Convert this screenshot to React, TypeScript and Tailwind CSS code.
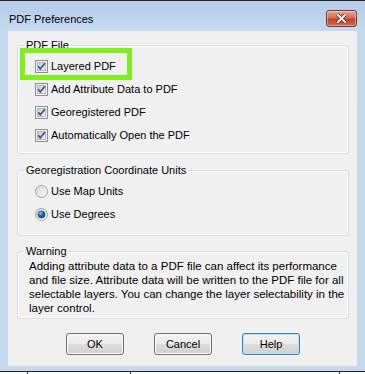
import type { ReactNode } from 'react'

const CheckBox = () => (
  <svg width="13" height="13" viewBox="0 0 13 13" className="shrink-0">
    <defs>
      <linearGradient id="cbFill" x1="0" y1="0" x2="1" y2="1">
        <stop offset="0" stopColor="#c3c9d1" />
        <stop offset="1" stopColor="#f5f6f7" />
      </linearGradient>
    </defs>
    <rect x="0.5" y="0.5" width="12" height="12" fill="#f4f4f4" stroke="#8e8f8f" />
    <rect x="2.5" y="2.5" width="8" height="8" fill="url(#cbFill)" stroke="#b3b8bf" />
    <path d="M3.2 6.2 L5.3 8.9 L9.9 3.3" fill="none" stroke="#44599a" strokeWidth="1.8" />
  </svg>
)

const RadioDot = ({ on }: { on?: boolean }) => (
  <svg width="13" height="13" viewBox="0 0 13 13" className="shrink-0">
    <defs>
      <linearGradient id="rdFill" x1="0" y1="0" x2="1" y2="1">
        <stop offset="0" stopColor="#d6d6d6" />
        <stop offset="1" stopColor="#fbfbfb" />
      </linearGradient>
      <radialGradient id="rdDot" cx="0.35" cy="0.3" r="0.8">
        <stop offset="0" stopColor="#8fd2f3" />
        <stop offset="0.45" stopColor="#1f6fa6" />
        <stop offset="1" stopColor="#0c3a62" />
      </radialGradient>
    </defs>
    <circle cx="6.5" cy="6.5" r="6" fill="url(#rdFill)" stroke="#a4a4a4" />
    {on && <circle cx="6.5" cy="6.5" r="3.6" fill="url(#rdDot)" stroke="#174a73" strokeWidth="0.6" />}
  </svg>
)

const Group = ({
  label,
  className,
  children,
}: {
  label: string
  className?: string
  children: ReactNode
}) => (
  <fieldset
    className={`rounded-[3px] border border-[#d5dfe5] shadow-[inset_0_0_0_1px_#fafafa] ${className ?? ''}`}
  >
    <legend className="ml-[6px] bg-[#f0f0f0] px-[2px] leading-[13px]">{label}</legend>
    {children}
  </fieldset>
)

const Button = ({ label, isDefault }: { label: string; isDefault?: boolean }) => (
  <button
    className={`h-[22px] w-[58px] rounded-[3px] border bg-[linear-gradient(#f2f2f2_0%,#ebebeb_50%,#dddddd_50%,#cfcfcf_100%)] leading-none text-black ${
      isDefault
        ? 'border-[#3c7fb1] shadow-[inset_0_0_0_1px_#b7e3f8]'
        : 'border-[#707070] shadow-[inset_0_0_0_1px_#fbfbfb]'
    }`}
  >
    {label}
  </button>
)

export default function App() {
  const checks = [
    'Layered PDF',
    'Add Attribute Data to PDF',
    'Georegistered PDF',
    'Automatically Open the PDF',
  ]

  return (
    <div className="relative h-[374px] w-[365px] overflow-hidden bg-white font-['Liberation_Sans',Arial,sans-serif] text-[11px] text-black">
      <div className="flex h-[372px] flex-col border-y border-[#262626] bg-[linear-gradient(#b6cce8,#c5d9ef_30px,#c4d8ee)]">
        {/* title bar */}
        <div className="flex h-[30px] items-start justify-between pl-[9px] pr-[8px]">
          <span className="mt-[11px] text-[11px] leading-[15px]">PDF Preferences</span>
          <div className="mt-[9px] flex h-[17px] w-[31px] items-center justify-center rounded-[3px] border border-[#7b3a2d] bg-[linear-gradient(#e8a898,#d36c56_45%,#c2432c_55%,#d06a4f)] shadow-[inset_0_0_0_1px_rgba(255,255,255,0.35)]">
            <svg width="13" height="11" viewBox="0 0 13 11">
              <path d="M2.5 1.5 L10.5 9.5 M10.5 1.5 L2.5 9.5" stroke="#5d2216" strokeWidth="3.4" />
              <path d="M2.5 1.5 L10.5 9.5 M10.5 1.5 L2.5 9.5" stroke="#ffffff" strokeWidth="1.8" />
            </svg>
          </div>
        </div>

        {/* client area */}
        <div className="mx-[8px] flex h-[335px] flex-col bg-[#f0f0f0] pl-[9px] pr-[8px] pt-[8px]">
          <Group label="PDF File">
            <div className="flex flex-col gap-[6px] pb-[9px] pl-[17px] pt-[6px]">
              {checks.map((c) => (
                <label key={c} className="flex h-[17px] items-center gap-[3px]">
                  <CheckBox />
                  <span>{c}</span>
                </label>
              ))}
            </div>
          </Group>

          <Group label="Georegistration Coordinate Units" className="mt-[10px]">
            <div className="flex flex-col gap-[6px] pb-[12px] pl-[17px] pt-[6px]">
              <label className="flex h-[17px] items-center gap-[3px]">
                <RadioDot />
                <span>Use Map Units</span>
              </label>
              <label className="flex h-[17px] items-center gap-[3px]">
                <RadioDot on />
                <span>Use Degrees</span>
              </label>
            </div>
          </Group>

          <Group label="Warning" className="mt-[9px]">
            <p className="whitespace-nowrap pb-[3px] pl-[11px] pt-[1px] text-[11.5px] leading-[14px]">
              Adding attribute data to a PDF file can affect its performance
              <br />
              and file size. Attribute data will be written to the PDF file for all
              <br />
              selectable layers. You can change the layer selectability in the
              <br />
              layer control.
            </p>
          </Group>

          <div className="mt-[14px] flex justify-center gap-[30px]">
            <Button label="OK" />
            <Button label="Cancel" />
            <Button label="Help" isDefault />
          </div>
        </div>
      </div>

      {/* window behind the dialog */}
      <div className="flex h-[2px] bg-white">
        <div className="w-[28px] border-r border-[#333333]" />
        <div className="w-[103px] border-r border-[#333333]" />
        <div className="w-[209px] border-r border-[#333333]" />
      </div>

      {/* highlight annotation */}
      <div className="absolute left-[20px] top-[48px] h-[32px] w-[112px] border-[5px] border-[#80f01c]" />
    </div>
  )
}
